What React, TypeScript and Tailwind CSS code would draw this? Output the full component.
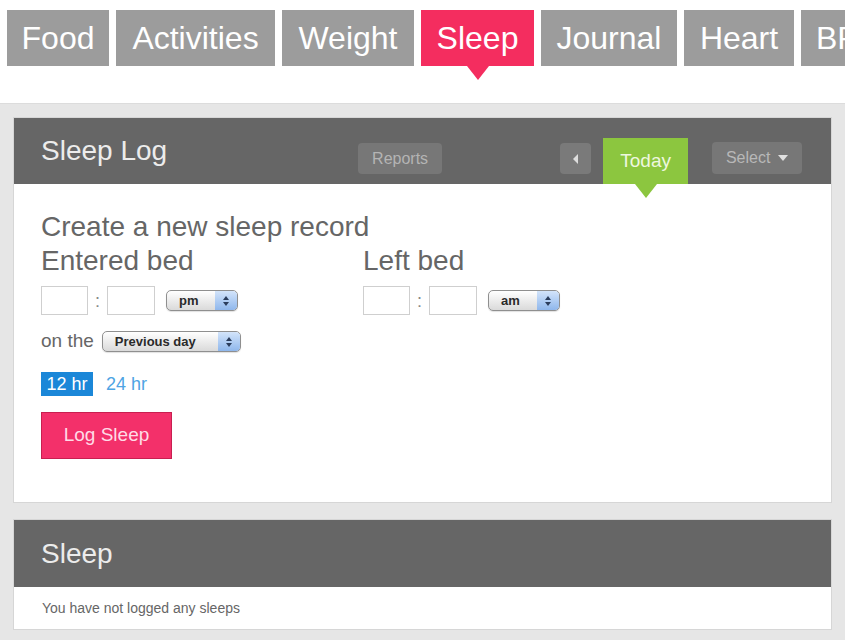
import React from "react";

const tabs = [
  { label: "Food", w: "w-[102px]" },
  { label: "Activities", w: "w-[159px]" },
  { label: "Weight", w: "w-[132px]" },
  { label: "Sleep", w: "w-[113px]", active: true },
  { label: "Journal", w: "w-[136px]" },
  { label: "Heart", w: "w-[110px]" },
  { label: "BP", w: "px-[15px]" },
];

function AquaSelect({ label, className }: { label: string; className: string }) {
  return (
    <span
      className={`flex h-[21px] items-stretch overflow-hidden rounded-[5px] border border-[#8f8f8f] bg-linear-to-b from-white to-[#dadada] shadow-[0_1px_1px_rgba(0,0,0,0.12)] ${className}`}
    >
      <span className="flex-1 truncate pl-[12px] text-[13px] font-bold leading-[19px] text-[#2a2a2a]">
        {label}
      </span>
      <span className="flex w-[22px] flex-col items-center justify-center gap-[2px] rounded-r-[4px] bg-linear-to-b from-[#d3e4fa] to-[#8fb7ec]">
        <span className="h-0 w-0 border-x-[3px] border-b-[4px] border-x-transparent border-b-[#2b3d5c]" />
        <span className="h-0 w-0 border-x-[3px] border-t-[4px] border-x-transparent border-t-[#2b3d5c]" />
      </span>
    </span>
  );
}

function TimeInputs({ meridiem }: { meridiem: string }) {
  return (
    <div className="mt-[8px] flex h-[29px] items-center">
      <span className="h-[29px] w-[47px] border border-[#cfcfcf] bg-white" />
      <span className="mx-[7px] text-[18px] leading-none text-[#888]">:</span>
      <span className="h-[29px] w-[48px] border border-[#cfcfcf] bg-white" />
      <AquaSelect label={meridiem} className="ml-[11px] w-[72px]" />
    </div>
  );
}

export default function App() {
  return (
    <div
      className="h-[640px] w-[845px] overflow-hidden bg-white"
      style={{ fontFamily: '"Liberation Sans", Arial, sans-serif' }}
    >
      {/* top nav */}
      <div className="flex h-[103px] gap-[7px] pl-[7px] pt-[10px]">
        {tabs.map((t) => (
          <div
            key={t.label}
            className={`relative flex h-[56px] shrink-0 items-center justify-center text-[32px] text-white ${t.w} ${
              t.active ? "bg-[#f42d5f]" : "bg-[#9c9c9c]"
            }`}
          >
            {t.label}
            {t.active && (
              <span className="absolute left-1/2 top-full h-0 w-0 -translate-x-1/2 border-x-[11px] border-t-[14px] border-x-transparent border-t-[#f42d5f]" />
            )}
          </div>
        ))}
      </div>

      <div className="flex h-[537px] flex-col gap-[16px] border-t border-[#dcdcdc] bg-[#e6e6e6] px-[13px] pt-[13px]">
        {/* sleep log panel */}
        <div className="border border-[#d6d6d6] bg-white">
          <div className="flex h-[66px] items-end bg-[#666666] px-[27px]">
            <div className="self-center text-[28px] text-[#ececec]">Sleep Log</div>
            <button className="mb-[10px] ml-[191px] h-[31px] w-[84px] rounded-[4px] bg-[#777777] text-[16px] text-[#b4b4b4]">
              Reports
            </button>
            <button className="mb-[10px] ml-[118px] flex h-[31px] w-[31px] items-center justify-center rounded-[4px] bg-[#7a7a7a]">
              <span className="h-0 w-0 border-y-[5px] border-r-[5px] border-y-transparent border-r-[#dddddd]" />
            </button>
            <div className="relative ml-[12px] flex h-[46px] w-[85px] items-center justify-center bg-[#8cc63f] text-[19px] text-[#eef7df]">
              Today
              <span className="absolute left-1/2 top-full z-10 h-0 w-0 -translate-x-1/2 border-x-[11px] border-t-[14px] border-x-transparent border-t-[#8cc63f]" />
            </div>
            <button className="mb-[10px] ml-[24px] flex h-[32px] w-[90px] items-center justify-center gap-[8px] rounded-[4px] bg-[#777777] text-[16px] text-[#b8b8b8]">
              Select
              <span className="h-0 w-0 border-x-[5px] border-t-[6px] border-x-transparent border-t-[#e0e0e0]" />
            </button>
          </div>

          <div className="px-[27px] pb-[43px] pt-[26px] text-[#666666]">
            <div className="text-[28px] leading-[34px]">Create a new sleep record</div>
            <div className="flex">
              <div className="w-[322px]">
                <div className="text-[28px] leading-[34px]">Entered bed</div>
                <TimeInputs meridiem="pm" />
              </div>
              <div>
                <div className="text-[28px] leading-[34px]">Left bed</div>
                <TimeInputs meridiem="am" />
              </div>
            </div>

            <div className="mt-[16px] flex h-[21px] items-center">
              <span className="text-[19px] text-[#666]">on the</span>
              <AquaSelect label="Previous day" className="ml-[8px] w-[139px]" />
            </div>

            <div className="mt-[20px] flex h-[24px] items-center gap-[13px] text-[18px]">
              <span className="flex h-[24px] w-[52px] items-center justify-center bg-[#1b87d8] text-white">12 hr</span>
              <span className="text-[#4ea4e4]">24 hr</span>
            </div>

            <button className="mt-[16px] h-[47px] w-[131px] border border-[#c81f50] bg-[#f3306a] text-[19px] text-[#ffdbe6]">
              Log Sleep
            </button>
          </div>
        </div>

        {/* sleep list panel */}
        <div className="border border-[#d6d6d6] bg-white">
          <div className="flex h-[67px] items-center bg-[#666666] px-[27px] text-[28px] text-[#ececec]">Sleep</div>
          <div className="flex h-[42px] items-center px-[28px] text-[14px] text-[#666]">
            You have not logged any sleeps
          </div>
        </div>
      </div>
    </div>
  );
}
